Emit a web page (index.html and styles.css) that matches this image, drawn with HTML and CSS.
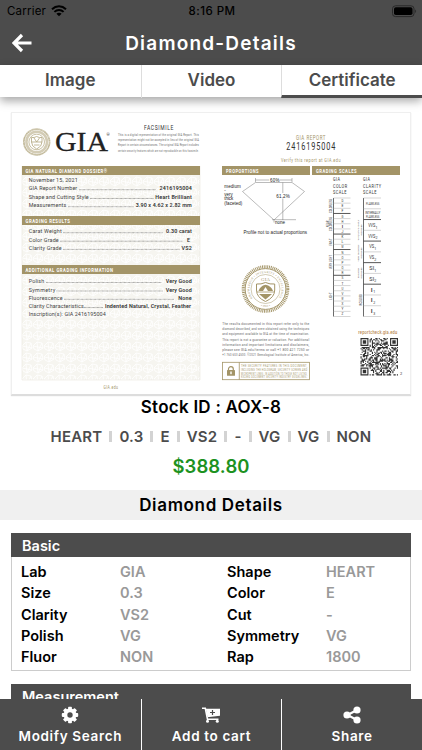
FILE: index.html
```html
<!DOCTYPE html>
<html lang="en">
<head>
    <meta charset="UTF-8">
    <meta name="viewport" content="width=device-width, initial-scale=1.0">
    <title>Diamond-Details</title>
    <link rel="stylesheet" href="styles.css">
</head>
<body>
    <div class="app">
        <div class="top">
            <div class="status-bar">
                <div class="carrier">
                    <span class="carrier-name">Carrier</span>
                    <svg class="wifi" width="16" height="12" viewBox="0 0 16 12">
                        <path d="M1 4.2C5 .4 11 .4 15 4.2" fill="none" stroke="#000" stroke-width="2"/>
                        <path d="M3.4 6.9C6 4.4 10 4.4 12.6 6.9" fill="none" stroke="#000" stroke-width="2"/>
                        <path d="M8 11.3L5.4 8.7C6.8 7.3 9.2 7.3 10.6 8.7Z"/>
                    </svg>
                </div>
                <span class="clock">8:16 PM</span>
                <svg class="battery" width="25" height="13" viewBox="0 0 25 13">
                    <rect x=".5" y=".8" width="21.5" height="10.8" rx="3" fill="none" stroke="#292929"/>
                    <rect x="2" y="2.3" width="18.5" height="7.8" rx="1.8"/>
                    <path d="M23.2 4.5c1.2.5 1.2 3 0 3.5z" fill="#292929"/>
                </svg>
            </div>
            <div class="header">
                <svg class="back" width="20" height="20" viewBox="0 0 20 20">
                    <path d="M10 2L2 10L10 18M2.5 10H19.5" fill="none" stroke="#fff" stroke-width="3.2"/>
                </svg>
                <h1 class="title">Diamond-Details</h1>
            </div>
        </div>

        <div class="tabs">
            <div class="tab">Image</div>
            <div class="tab">Video</div>
            <div class="tab active">Certificate</div>
        </div>

        <div class="content">
            <div class="certificate">
                <svg class="cert-svg" width="400" height="282" viewBox="11 113 400 282">
                    <defs>
                        <pattern id="paper" width="11" height="11" patternUnits="userSpaceOnUse">
                            <rect width="11" height="11" fill="#f6f5f0"/>
                            <path d="M0 5L4 1L9 2L10 7L5 10L1 8ZM4 1L5 10M0 5L10 7M9 2L5 10" fill="none" stroke="#fff" stroke-width=".8"/>
                        </pattern>
                        <path id="seal-top" d="M252.4 298.2a16 16 0 1 1 26.2 0"/>
                        <path id="seal-bottom" d="M247.5 289a18 18 0 0 0 36 0"/>
                    </defs>

                    <!-- left panel -->
                    <rect x="22" y="166" width="178" height="214" fill="url(#paper)"/>
                    <path d="M22 166V380H200V166" fill="none" stroke="#e9e6dd" stroke-width=".6"/>
                    <g fill="none" stroke="#b1a67e">
                        <circle cx="36.7" cy="142" r="12.8" stroke-width="1.8" stroke-dasharray=".7 .35"/>
                        <circle cx="36.7" cy="142" r="10.3" stroke-width="2.5" stroke="#d3ccb5"/>
                        <circle cx="36.7" cy="142" r="7.8" stroke-width=".7"/>
                        <path d="M31.5 137.5Q34 138 36.7 136.5Q39.3 138 42 137.5V142Q42 146.5 36.7 149Q31.5 146.5 31.5 142ZM31.5 142H42M34 138L36.7 142L39.5 138M34 145H39.5" stroke-width=".8"/>
                    </g>
                    <text x="55" y="151" class="logo" textLength="53" lengthAdjust="spacingAndGlyphs">GIA</text>
                    <text x="106.5" y="136" class="tiny">®</text>
                    <text x="144" y="130.3" class="din dark" font-size="7.2" textLength="30" lengthAdjust="spacingAndGlyphs">FACSIMILE</text>
                    <g class="din fine" font-size="4">
                        <text x="118" y="136.2" textLength="81" lengthAdjust="spacingAndGlyphs">This is a digital representation of the original GIA Report. This</text>
                        <text x="118" y="141.3" textLength="81" lengthAdjust="spacingAndGlyphs">representation might not be accepted in lieu of the original GIA</text>
                        <text x="118" y="146.4" textLength="81" lengthAdjust="spacingAndGlyphs">Report in certain circumstances. The original GIA Report includes</text>
                        <text x="118" y="151.5" textLength="81" lengthAdjust="spacingAndGlyphs">certain security features which are not reproducible on this facsimile.</text>
                    </g>
                    <g fill="#a39467">
                        <rect x="22" y="166" width="178" height="9"/>
                        <rect x="22" y="216" width="178" height="9"/>
                        <rect x="22" y="265" width="178" height="9"/>
                        <rect x="222" y="166" width="88" height="9"/>
                        <rect x="312" y="166" width="88" height="9"/>
                    </g>
                    <g class="din band">
                        <text x="25.5" y="172.9" textLength="82" lengthAdjust="spacingAndGlyphs">GIA NATURAL DIAMOND DOSSIER®</text>
                        <text x="25.5" y="222.8" textLength="45" lengthAdjust="spacingAndGlyphs">GRADING RESULTS</text>
                        <text x="25.5" y="272" textLength="88" lengthAdjust="spacingAndGlyphs">ADDITIONAL GRADING INFORMATION</text>
                        <text x="226" y="172.9" textLength="33" lengthAdjust="spacingAndGlyphs">PROPORTIONS</text>
                        <text x="316" y="172.9" textLength="41" lengthAdjust="spacingAndGlyphs">GRADING SCALES</text>
                    </g>
                    <g class="row-label">
                        <text x="28.7" y="181.7" textLength="49">November 15, 2021</text>
                        <text x="28.7" y="190.2" textLength="48.5">GIA Report Number</text>
                        <text x="28.7" y="199" textLength="60">Shape and Cutting Style</text>
                        <text x="28.7" y="207.2" textLength="37.5">Measurements</text>
                        <text x="28.7" y="233.2" textLength="33">Carat Weight</text>
                        <text x="28.7" y="241.7" textLength="30">Color Grade</text>
                        <text x="28.7" y="249.9" textLength="33">Clarity Grade</text>
                        <text x="28.7" y="283" textLength="15.5">Polish</text>
                        <text x="28.7" y="291.5" textLength="26.5">Symmetry</text>
                        <text x="28.7" y="299.8" textLength="34">Fluorescence</text>
                        <text x="28.7" y="308" textLength="55">Clarity Characteristics</text>
                        <text x="28.7" y="316.3" textLength="77">Inscription(s): GIA 2416195004</text>
                    </g>
                    <g class="row-value">
                        <text x="159.5" y="190.2" textLength="32.3">2416195004</text>
                        <text x="155.3" y="199" textLength="36.5">Heart Brilliant</text>
                        <text x="135.7" y="207.2" textLength="56">3.90 x 4.62 x 2.82 mm</text>
                        <text x="166" y="233.2" textLength="25.8">0.30 carat</text>
                        <text x="187" y="241.7">E</text>
                        <text x="181.5" y="249.9" textLength="10.3">VS2</text>
                        <text x="165.7" y="283" textLength="26">Very Good</text>
                        <text x="165.7" y="291.5" textLength="26">Very Good</text>
                        <text x="178.3" y="299.8" textLength="13.4">None</text>
                        <text x="105" y="308" textLength="86">Indented Natural, Crystal, Feather</text>
                    </g>
                    <path class="leaders" d="M79 189.7H156M90 198.5H154M68 206.7H133.5M63 232.7H163M60 241.2H182.5M63 249.4H179.5M46 282.5H161.5M56.5 291H162.5M64 299.3H174M84 307.5H103.5"/>
                    <text x="103.4" y="388.5" class="din gold" font-size="5" textLength="15" lengthAdjust="spacingAndGlyphs">GIA.edu</text>

                    <!-- report number -->
                    <text x="296" y="139.8" class="din gold" font-size="6.8" textLength="30" lengthAdjust="spacingAndGlyphs">GIA REPORT</text>
                    <text x="286.3" y="149.5" class="din dark" font-size="10" textLength="50" lengthAdjust="spacingAndGlyphs">2416195004</text>
                    <text x="281" y="161.5" class="din gold" font-size="5.5" textLength="60" lengthAdjust="spacingAndGlyphs">Verify this report at GIA.edu</text>

                    <!-- proportions -->
                    <path d="M255.5 182.5L242.5 191.5L274 220L304.5 191.5L292 182.500ZM255.5 178V182M292 178V182M255.5 180H269M280 180H292M282.8 182.5V193M282.8 198.5V220M272 219.7H296M274 220V222.5" fill="none" stroke="#777" stroke-width=".5"/>
                    <g class="arial">
                        <text x="270" y="181.6" textLength="9.5">60%</text>
                        <text x="276.3" y="198" textLength="13.5">61.2%</text>
                        <text x="224.3" y="187.6" textLength="16.5">medium</text>
                        <text x="224.3" y="191.8">-</text>
                        <text x="224.3" y="196.2" textLength="8.5">very</text>
                        <text x="224.3" y="200.4" textLength="9">thick</text>
                        <text x="224.3" y="205" textLength="18">(faceted)</text>
                        <text x="275" y="223.8" textLength="10">none</text>
                        <text x="243.5" y="233.7" textLength="63.5">Profile not to actual proportions</text>
                    </g>

                    <!-- seal -->
                    <g fill="none" stroke="#a39467">
                        <circle cx="265.5" cy="289" r="22.3" stroke-width="3" stroke-dasharray=".95 .82"/>
                        <circle cx="265.5" cy="289" r="20.4" stroke-width="1"/>
                        <circle cx="265.5" cy="289" r="14.5" stroke-width=".5"/>
                        <path d="M256.5 284Q261 284.5 265.5 282.5Q270 284.5 274.7 284V290Q274.7 297.5 265.5 301.5Q256.5 297.5 256.5 290Z"/>
                        <path d="M257 292H274" stroke-width=".8"/>
                    </g>
                    <path d="M258.5 291Q260 286 265.5 284.8Q271.5 286 273 291H268L265.5 287L263 291ZM259 294H272L265.5 299.5Z" fill="#a39467"/>
                    <text x="261" y="281" class="seal-name" textLength="9">GIA</text>
                    <text class="seal-text"><textPath href="#seal-top" textLength="69">KNOWLEDGE • INTEGRITY • EXCELLENCE</textPath></text>
                    <text class="seal-text" text-anchor="middle"><textPath href="#seal-bottom" startOffset="50%">• 1931 •</textPath></text>

                    <g class="din fine" font-size="4.2">
                        <text x="222.3" y="325" textLength="87" lengthAdjust="spacingAndGlyphs">The results documented in this report refer only to the</text>
                        <text x="222.3" y="330.2" textLength="87" lengthAdjust="spacingAndGlyphs">diamond described, and were obtained using the techniques</text>
                        <text x="222.3" y="335.4" textLength="87" lengthAdjust="spacingAndGlyphs">and equipment available to GIA at the time of examination.</text>
                        <text x="222.3" y="340.5" textLength="87" lengthAdjust="spacingAndGlyphs">This report is not a guarantee or valuation. For additional</text>
                        <text x="222.3" y="345.7" textLength="87" lengthAdjust="spacingAndGlyphs">information and important limitations and disclaimers,</text>
                        <text x="222.3" y="350.9" textLength="87" lengthAdjust="spacingAndGlyphs">please see GIA.edu/terms or call +1 800 421 7250 or</text>
                        <text x="222.3" y="356" textLength="87" lengthAdjust="spacingAndGlyphs">+1 760 603 4500. ©2021 Gemological Institute of America, Inc.</text>
                    </g>
                    <g fill="none" stroke="#a39467" stroke-width=".8">
                        <rect x="222.5" y="362.3" width="87" height="17.4"/>
                        <path d="M239.3 362.3V379.7"/>
                        <path d="M228.5 371V369a2.4 2.4 0 0 1 4.8 0V371" stroke-width="1.2"/>
                    </g>
                    <rect x="227" y="370" width="8" height="5.8" rx=".5" fill="#a39467"/>
                    <rect x="230.3" y="371.5" width="1.4" height="2.7" fill="#fff"/>
                    <g class="din gold" font-size="3.7">
                        <text x="241" y="367.2" textLength="66.5" lengthAdjust="spacingAndGlyphs">THE SECURITY FEATURES IN THIS DOCUMENT,</text>
                        <text x="241" y="370.9" textLength="66.5" lengthAdjust="spacingAndGlyphs">INCLUDING THE HOLOGRAM, SECURITY SCREEN AND</text>
                        <text x="241" y="374.6" textLength="66.5" lengthAdjust="spacingAndGlyphs">MICROPRINT LINES, IN ADDITION TO THOSE NOT LISTED,</text>
                        <text x="241" y="378.3" textLength="66.5" lengthAdjust="spacingAndGlyphs">EXCEED DOCUMENT SECURITY INDUSTRY GUIDELINES.</text>
                    </g>

                    <!-- scales -->
                    <g class="din dark" font-size="5.8">
                        <text x="333" y="181.2" textLength="7.5" lengthAdjust="spacingAndGlyphs">GIA</text>
                        <text x="333" y="187.8" textLength="14.5" lengthAdjust="spacingAndGlyphs">COLOR</text>
                        <text x="333" y="194.3" textLength="14" lengthAdjust="spacingAndGlyphs">SCALE</text>
                        <text x="363" y="181.2" textLength="7.5" lengthAdjust="spacingAndGlyphs">GIA</text>
                        <text x="363" y="187.8" textLength="18.5" lengthAdjust="spacingAndGlyphs">CLARITY</text>
                        <text x="363" y="194.3" textLength="14" lengthAdjust="spacingAndGlyphs">SCALE</text>
                    </g>
                    <g id="color-scale"></g>
                    <g id="clarity-scale"></g>

                    <text x="358.3" y="333.5" class="din link" textLength="39" lengthAdjust="spacingAndGlyphs">reportcheck.gia.edu</text>
                    <g id="qr" transform="translate(360.5 338)"></g>
                    <text x="400" y="375.3" class="tiny">2</text>
                </svg>
            </div>

            <div class="stock">Stock ID : AOX-8</div>
            <div class="grades">
                <span>HEART</span><i></i><span>0.3</span><i></i><span>E</span><i></i><span>VS2</span><i></i><span>-</span><i></i><span>VG</span><i></i><span>VG</span><i></i><span>NON</span>
            </div>
            <div class="price">$388.80</div>

            <h2 class="section-title">Diamond Details</h2>

            <div class="panel">
                <div class="panel-head">Basic</div>
                <div class="panel-body">
                    <b>Lab</b><span>GIA</span><b>Shape</b><span>HEART</span>
                    <b>Size</b><span>0.3</span><b>Color</b><span>E</span>
                    <b>Clarity</b><span>VS2</span><b>Cut</b><span>-</span>
                    <b>Polish</b><span>VG</span><b>Symmetry</b><span>VG</span>
                    <b>Fluor</b><span>NON</span><b>Rap</b><span>1800</span>
                </div>
            </div>
            <div class="panel">
                <div class="panel-head">Measurement</div>
            </div>
        </div>

        <div class="actions">
            <div class="action">
                <svg width="18" height="18" viewBox="0 0 18 18">
                    <g fill="#fff">
                        <rect x="7.1" y=".8" width="3.8" height="16.4" rx=".8"/>
                        <rect x="7.1" y=".8" width="3.8" height="16.4" rx=".8" transform="rotate(45 9 9)"/>
                        <rect x="7.1" y=".8" width="3.8" height="16.4" rx=".8" transform="rotate(90 9 9)"/>
                        <rect x="7.1" y=".8" width="3.8" height="16.4" rx=".8" transform="rotate(135 9 9)"/>
                        <circle cx="9" cy="9" r="6.5"/>
                    </g>
                    <circle cx="9" cy="9" r="2.7" fill="#4c4c4c"/>
                </svg>
                <span>Modify Search</span>
            </div>
            <div class="action">
                <svg width="20" height="18" viewBox="0 0 20 18">
                    <path d="M1 2.3H4.3L6.5 13.3H17.5" fill="none" stroke="#fff" stroke-width="1.6"/>
                    <path d="M4.8 2.700H19V9.800L6.500 11.300Z" fill="#fff"/>
                    <path d="M11.500 4V9M9 6.500H14" stroke="#4c4c4c" stroke-width="1.200"/>
                    <circle cx="6.500" cy="15.300" r="1.500" fill="#fff"/>
                    <circle cx="16.300" cy="15.300" r="1.500" fill="#fff"/>
                </svg>
                <span>Add to cart</span>
            </div>
            <div class="action">
                <svg width="18" height="18" viewBox="0 0 18 18">
                    <path d="M14 4L4.500 9L14 14" fill="none" stroke="#fff" stroke-width="2.200"/>
                    <g fill="#fff">
                        <circle cx="14" cy="4" r="3.600"/>
                        <circle cx="4" cy="9" r="3.600"/>
                        <circle cx="14" cy="14" r="3.600"/>
                    </g>
                </svg>
                <span>Share</span>
            </div>
        </div>
    </div>

    <script>
        const top0 = 198;
        const bottom0 = 316.5;

        function label(x, y, text, size, rotated) {
            const turn = rotated ? ` transform="rotate(-90 ${x} ${y})"` : '';
            return `<text x="${x}" y="${y}" class="scale" font-size="${size}"${turn}>${text}</text>`;
        }

        // condensed label, squeezed to the given width
        function narrow(x, y, text, size, width) {
            return `<text x="${x}" y="${y}" class="scale" font-size="${size}" textLength="${width}" lengthAdjust="spacingAndGlyphs">${text}</text>`;
        }

        function drawScale(id, x, width, rows, heavy) {
            const step = (bottom0 - top0) / rows.length;
            const mid = x + width / 2 + 0.5;
            let out = `<path d="M${x} ${top0}V${bottom0}" stroke="#444" stroke-width=".8"/>`;
            for (let i = 0; i <= rows.length; i++) {
                const y = top0 + i * step;
                const bold = heavy.includes(i);
                out += `<path d="M${x} ${y}h${width}" stroke="${bold ? '#444' : '#aaa'}" stroke-width="${bold ? 0.9 : 0.5}"/>`;
                if (!rows[i]) continue;
                if (rows[i] === 'FLAWLESS') {
                    out += narrow(mid, y + step / 2 + 1.4, 'FLAWLESS', 3.8, 13.5);
                } else if (rows[i] === 'INTERNALLY FLAWLESS') {
                    out += narrow(mid, y + 4.8, 'INTERNALLY', 3.8, 15);
                    out += narrow(mid, y + 9.4, 'FLAWLESS', 3.8, 13.5);
                } else if (rows[i].includes('_')) {
                    const [grade, sub] = rows[i].split('_');
                    const w = grade.length * 2.4;
                    out += narrow(mid - 1, y + step / 2 + 2, grade, 5.8, w);
                    out += label(mid + w / 2 + 0.2, y + step / 2 + 3.6, sub, 3.6);
                } else {
                    out += narrow(mid, y + step / 2 + 1.5, rows[i], 4.2, 1.9);
                }
            }
            document.getElementById(id).innerHTML = out;
        }

        drawScale('color-scale', 333.5, 17, 'DEFGHIJKLMNOPQRSTUVWXYZ'.split(''), [3, 7, 10, 15]);
        drawScale('clarity-scale', 363.5, 17.5,
            ['FLAWLESS', 'INTERNALLY FLAWLESS', 'VVS_1', 'VVS_2', 'VS_1', 'VS_2', 'SI_1', 'SI_2', 'I_1', 'I_2', 'I_3'],
            [2, 4, 6, 8]);

        document.getElementById('color-scale').innerHTML +=
            label(332, 206, 'COLORLESS', 2.6, true) +
            label(328.5, 224, 'NEAR', 2.6, true) +
            label(332, 224, 'COLORLESS', 2.6, true) +
            label(332, 242, 'FAINT', 2.6, true) +
            label(332, 262, 'VERY LIGHT', 2.6, true) +
            label(332, 296, 'LIGHT', 2.6, true);
        document.getElementById('clarity-scale').innerHTML +=
            label(358.5, 230, 'VERY, VERY SLIGHTLY', 2.1, true) +
            label(362, 230, 'INCLUDED', 2.4, true) +
            label(358.5, 253, 'VERY SLIGHTLY', 2.4, true) +
            label(362, 253, 'INCLUDED', 2.4, true) +
            label(358.5, 273, 'SLIGHTLY', 2.4, true) +
            label(362, 273, 'INCLUDED', 2.4, true) +
            label(362, 300, 'INCLUDED', 2.6, true);

        // QR code, 33 modules a side
        const n = 33;
        const unit = 37.5 / n;
        let seed = 2416;
        let squares = '';
        function finder(x, y) {
            return `M${x} ${y}h7v7h-7zM${x + 1} ${y + 1}v5h5v-5zM${x + 2} ${y + 2}h3v3h-3z`;
        }
        for (let y = 0; y < n; y++) {
            for (let x = 0; x < n; x++) {
                seed = (seed * 1103515245 + 12345) % 2147483648;
                const corner = (x < 8 && y < 8) || (x > n - 9 && y < 8) || (x < 8 && y > n - 9);
                if (!corner && seed / 2147483648 > 0.5) squares += `M${x} ${y}h1v1h-1z`;
            }
        }
        squares += finder(0, 0) + finder(n - 7, 0) + finder(0, n - 7);
        document.getElementById('qr').innerHTML = `<path transform="scale(${unit})" fill="#333" d="${squares}"/>`;
    </script>
</body>
</html>
```
FILE: styles.css
```css
body {
    margin: 0;
    font-family: Inter, "Liberation Sans", sans-serif;
    background: #fff;
    color: #000;
}
.app {
    display: flex;
    flex-direction: column;
    height: 750px;
    overflow: hidden;
}
.top {
    height: 65px;
    background: #4c4c4c;
    flex-shrink: 0;
}
.status-bar {
    display: grid;
    grid-template-columns: 1fr auto 1fr;
    align-items: center;
    height: 22px;
    padding: 0 5px 0 7px;
}
.carrier {
    display: flex;
    align-items: center;
    gap: 5px;
}
.carrier-name {
    font-size: 11.5px;
    letter-spacing: 0.2px;
}
.clock {
    font-size: 11.5px;
    font-weight: 500;
    letter-spacing: 0.5px;
}
.battery {
    justify-self: end;
}
.header {
    display: grid;
    grid-template-columns: 30px 1fr 30px;
    align-items: center;
    height: 42px;
    padding: 0 12px;
}
.title {
    margin: 0;
    text-align: center;
    color: #fff;
    font-size: 19px;
    font-weight: 600;
    letter-spacing: 1.2px;
}
.tabs {
    display: grid;
    grid-template-columns: 1fr 1fr 1fr;
    height: 32px;
    flex-shrink: 0;
    background: #fff;
    box-shadow: 0 4px 9px rgba(0, 0, 0, 0.35);
}
.tab {
    box-sizing: border-box;
    border-left: 1px solid #ddd;
    text-align: center;
    color: #4c4c4c;
    font-size: 17px;
    font-weight: 600;
    line-height: 30px;
}
.tab:first-child {
    border-left: none;
}
.tab.active {
    border-bottom: 3px solid #4c4c4c;
}
.content {
    flex: 1;
    min-height: 0;
    overflow: hidden;
    padding-top: 15px;
    clip-path: inset(10px 0 0 0);
}
.certificate {
    margin: 0 11px;
    height: 283px;
    box-sizing: border-box;
    border: 1px solid #efefef;
    border-bottom: 1px solid #ddd;
    box-shadow: 0 1px 1px #ddd;
    overflow: hidden;
}
.cert-svg {
    display: block;
    margin: 0 -1px;
}
.logo {
    font-family: "Liberation Serif", serif;
    font-size: 28px;
    fill: #222;
    stroke: #222;
    stroke-width: 0.3;
}
.din {
    font-family: Roboto, sans-serif;
    letter-spacing: 0.12em;
}
.dark {
    fill: #333;
}
.fine {
    fill: #666;
    letter-spacing: 0.06em;
}
.gold {
    fill: #a39467;
}
.link {
    fill: #b98850;
    font-size: 6px;
    font-weight: 500;
    letter-spacing: 0.04em;
}
.tiny {
    font-family: Roboto, sans-serif;
    font-size: 4px;
    fill: #333;
}
.band {
    fill: #fff;
    font-size: 5.8px;
    font-weight: 700;
}
.row-label {
    font-family: Roboto, sans-serif;
    font-size: 5.4px;
    fill: #444;
}
.row-value {
    font-family: Roboto, sans-serif;
    font-size: 5.4px;
    font-weight: 600;
    fill: #333;
}
.leaders {
    fill: none;
    stroke: #777;
    stroke-width: 0.7;
    stroke-dasharray: 0.8 0.5;
}
.arial {
    font-family: "Liberation Sans", sans-serif;
    font-size: 4.5px;
    fill: #222;
}
.seal-name {
    font-family: "Liberation Serif", serif;
    font-size: 4.8px;
    fill: #a39467;
}
.seal-text {
    font-family: "Liberation Serif", serif;
    font-size: 3px;
    fill: #a39467;
}
.scale {
    font-family: Roboto, sans-serif;
    text-anchor: middle;
    fill: #333;
}
.stock {
    text-align: center;
    font-size: 17px;
    font-weight: 600;
    letter-spacing: 0.25px;
    line-height: 24px;
}
.grades {
    display: flex;
    justify-content: center;
    align-items: center;
    height: 34px;
    color: #4c4c4c;
    font-size: 15px;
    font-weight: 600;
    letter-spacing: 0.2px;
}
.grades i {
    width: 3px;
    height: 11px;
    margin: 0 7px;
    background: #d3d3d3;
}
.price {
    text-align: center;
    color: #1d921f;
    font-size: 18.5px;
    font-weight: 600;
    letter-spacing: 0.1px;
    line-height: 26px;
}
.section-title {
    margin: 11px 0 13px;
    text-align: center;
    font-size: 17px;
    font-weight: 600;
    letter-spacing: 0.65px;
    line-height: 30px;
    background: #f0f0f0;
}
.panel {
    margin: 0 11px 13px;
    border: 1px solid #ccc;
    border-top: none;
}
.panel-head {
    margin: 0 -1px;
    padding-left: 11px;
    height: 24px;
    line-height: 25px;
    background: #4c4c4c;
    color: #fff;
    font-size: 14.5px;
    font-weight: 600;
}
.panel-body {
    display: grid;
    grid-template-columns: 99px 107px 99px 1fr;
    padding: 4px 9px 3px;
    font-size: 14.5px;
    line-height: 21.3px;
}
.panel-body b {
    font-weight: 600;
}
.panel-body span {
    color: #999;
    font-weight: 600;
}
.actions {
    display: grid;
    grid-template-columns: 1fr 1fr 1fr;
    height: 51px;
    flex-shrink: 0;
    background: #4c4c4c;
}
.action {
    box-sizing: border-box;
    display: flex;
    flex-direction: column;
    align-items: center;
    gap: 2px;
    padding-top: 7px;
    border-left: 1px solid #fff;
    color: #fff;
    font-size: 13.5px;
    font-weight: 600;
    letter-spacing: 0.65px;
    line-height: 20px;
}
.action:first-child {
    border-left: none;
}
```
